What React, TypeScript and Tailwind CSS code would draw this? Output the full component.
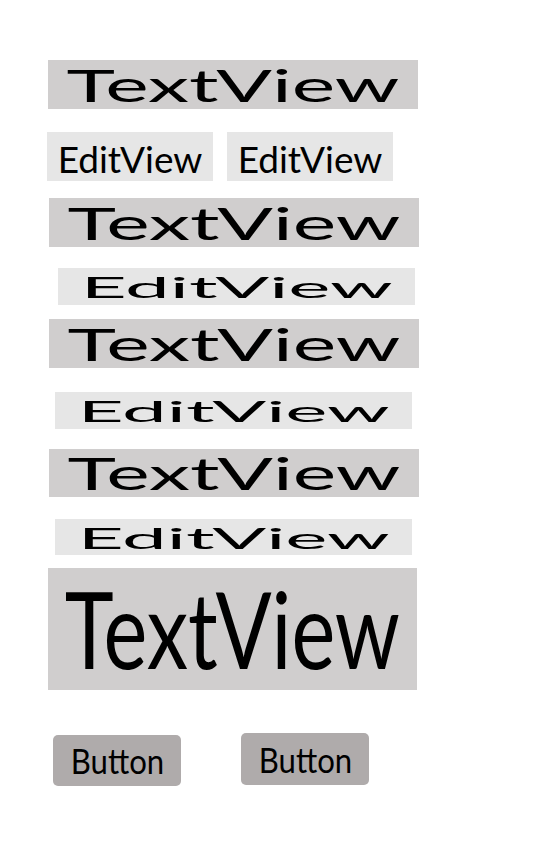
import React from "react";

const TV_BG = "bg-[#d0cece]";

function WideTextView({ ml, h = "h-[49px]" }: { ml: string; h?: string }) {
  return (
    <div className={`${ml} w-[370px] ${h} ${TV_BG} flex items-center justify-center`}>
      <span className="inline-block whitespace-nowrap leading-none text-black text-[44px] scale-x-[1.87]">TextView</span>
    </div>
  );
}

function WideEditView({ ml, h = "h-[37px]" }: { ml: string; h?: string }) {
  return (
    <div className={`${ml} w-[357px] ${h} bg-[#e6e6e6] flex items-center justify-center`}>
      <span className="inline-block whitespace-nowrap leading-none text-black text-[29px] scale-x-[2.75]">EditView</span>
    </div>
  );
}

function Button({ extra }: { extra: string }) {
  return (
    <div className={`${extra} w-[128px] rounded-[5px] bg-[#afabab] flex items-center justify-center`}>
      <span className="inline-block whitespace-nowrap leading-none text-black text-[35px] scale-x-[0.89]">Button</span>
    </div>
  );
}

export default function App() {
  return (
    <div className="w-[540px] h-[864px] bg-white flex flex-col font-['Lato','Open_Sans',sans-serif]">
      <div className="mt-[60px]">
        <WideTextView ml="ml-[48px]" />
      </div>
      <div className="mt-[23px] ml-[47px] flex gap-[14px]">
        <div className="w-[166px] h-[49px] pt-[3px] bg-[#e6e6e6] flex items-center justify-center">
          <span className="leading-none text-black text-[37px] whitespace-nowrap">EditView</span>
        </div>
        <div className="w-[166px] h-[49px] pt-[3px] bg-[#e6e6e6] flex items-center justify-center">
          <span className="leading-none text-black text-[37px] whitespace-nowrap">EditView</span>
        </div>
      </div>
      <div className="mt-[17px]">
        <WideTextView ml="ml-[49px]" />
      </div>
      <div className="mt-[21px]">
        <WideEditView ml="ml-[58px]" />
      </div>
      <div className="mt-[14px]">
        <WideTextView ml="ml-[49px]" />
      </div>
      <div className="mt-[24px]">
        <WideEditView ml="ml-[55px]" />
      </div>
      <div className="mt-[20px]">
        <WideTextView ml="ml-[49px]" h="h-[48px]" />
      </div>
      <div className="mt-[22px]">
        <WideEditView ml="ml-[55px]" h="h-[36px]" />
      </div>
      <div className="mt-[13px] ml-[48px] w-[369px] h-[122px] pb-[4px] bg-[#d0cece] flex items-center justify-center">
        <span className="inline-block whitespace-nowrap leading-none text-black text-[107px] scale-x-[0.775]">TextView</span>
      </div>
      <div className="mt-[43px] flex items-start">
        <Button extra="ml-[53px] mt-[2px] h-[51px]" />
        <Button extra="ml-[60px] h-[52px]" />
      </div>
    </div>
  );
}
